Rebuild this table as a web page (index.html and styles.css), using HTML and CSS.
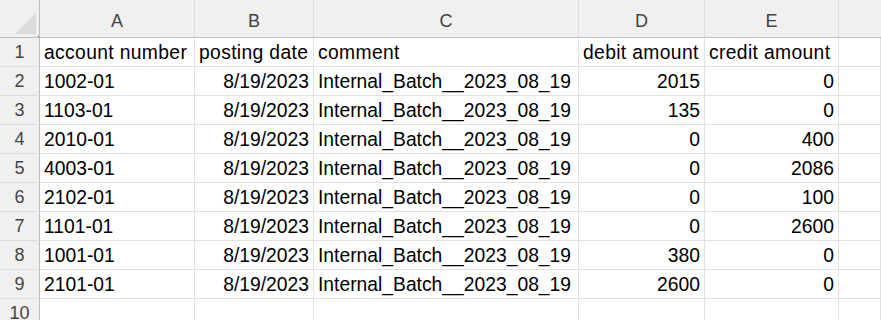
FILE: index.html
```html
<!DOCTYPE html>
<html>
<head>
<meta charset="utf-8">
<link rel="stylesheet" href="styles.css">
</head>
<body>
<div class="sheet">
  <div class="hd corner"><span class="tri"></span><span class="sel-dot"></span></div>
  <div class="hd col">A</div>
  <div class="hd col">B</div>
  <div class="hd col">C</div>
  <div class="hd col">D</div>
  <div class="hd col">E</div>
  <div class="hd col last"></div>

  <div class="hd rn">1</div>
  <div class="c t">account number</div>
  <div class="c t">posting date</div>
  <div class="c t">comment</div>
  <div class="c t">debit amount</div>
  <div class="c t">credit amount</div>
  <div class="c"></div>

  <div class="hd rn">2</div>
  <div class="c">1002-01</div>
  <div class="c r">8/19/2023</div>
  <div class="c">Internal_Batch__2023_08_19</div>
  <div class="c r">2015</div>
  <div class="c r">0</div>
  <div class="c"></div>

  <div class="hd rn">3</div>
  <div class="c">1103-01</div>
  <div class="c r">8/19/2023</div>
  <div class="c">Internal_Batch__2023_08_19</div>
  <div class="c r">135</div>
  <div class="c r">0</div>
  <div class="c"></div>

  <div class="hd rn">4</div>
  <div class="c">2010-01</div>
  <div class="c r">8/19/2023</div>
  <div class="c">Internal_Batch__2023_08_19</div>
  <div class="c r">0</div>
  <div class="c r">400</div>
  <div class="c"></div>

  <div class="hd rn">5</div>
  <div class="c">4003-01</div>
  <div class="c r">8/19/2023</div>
  <div class="c">Internal_Batch__2023_08_19</div>
  <div class="c r">0</div>
  <div class="c r">2086</div>
  <div class="c"></div>

  <div class="hd rn">6</div>
  <div class="c">2102-01</div>
  <div class="c r">8/19/2023</div>
  <div class="c">Internal_Batch__2023_08_19</div>
  <div class="c r">0</div>
  <div class="c r">100</div>
  <div class="c"></div>

  <div class="hd rn">7</div>
  <div class="c">1101-01</div>
  <div class="c r">8/19/2023</div>
  <div class="c">Internal_Batch__2023_08_19</div>
  <div class="c r">0</div>
  <div class="c r">2600</div>
  <div class="c"></div>

  <div class="hd rn">8</div>
  <div class="c">1001-01</div>
  <div class="c r">8/19/2023</div>
  <div class="c">Internal_Batch__2023_08_19</div>
  <div class="c r">380</div>
  <div class="c r">0</div>
  <div class="c"></div>

  <div class="hd rn">9</div>
  <div class="c">2101-01</div>
  <div class="c r">8/19/2023</div>
  <div class="c">Internal_Batch__2023_08_19</div>
  <div class="c r">2600</div>
  <div class="c r">0</div>
  <div class="c"></div>

  <div class="hd rn">10</div>
  <div class="c"></div>
  <div class="c"></div>
  <div class="c"></div>
  <div class="c"></div>
  <div class="c"></div>
  <div class="c"></div>
</div>
</body>
</html>
```

FILE: styles.css
```css
html, body {
  margin: 0;
  padding: 0;
  background: #ffffff;
  overflow: hidden;
}

.sheet {
  display: grid;
  grid-template-columns: 40px 155px 119px 265px 126px 134px 1fr;
  grid-template-rows: 38px repeat(10, 29px);
  width: 881px;
  font-family: "Liberation Sans", Arial, sans-serif;
  font-size: 19.3px;
  color: #000000;
}

.sheet > div {
  box-sizing: border-box;
  overflow: hidden;
  white-space: nowrap;
}

.hd {
  background: #f0f0f0;
  color: #444444;
  font-size: 18px;
}

.corner {
  position: relative;
  border-right: 1px solid #bdbdbd;
  border-bottom: 1px solid #bdbdbd;
}

.tri {
  position: absolute;
  right: 3px;
  bottom: 3px;
  width: 0;
  height: 0;
  border-left: 21px solid transparent;
  border-bottom: 21px solid #dbdbdb;
}

.sel-dot {
  position: absolute;
  right: -1px;
  bottom: -1px;
  width: 2px;
  height: 2px;
  background: #1e7a45;
}

.col {
  display: flex;
  align-items: flex-end;
  justify-content: center;
  padding-bottom: 5px;
  border-bottom: 1px solid #bdbdbd;
  border-right: 1px solid #dcdcdc;
}

.col.last {
  border-right: none;
}

.rn {
  text-align: center;
  line-height: 27px;
  padding-top: 1px;
  border-right: 1px solid #bdbdbd;
  border-bottom: 1px solid #dcdcdc;
}

.c {
  line-height: 27px;
  padding: 1px 4px 0 4px;
  border-right: 1px solid #e1e1e1;
  border-bottom: 1px solid #e1e1e1;
}

.c.t {
  letter-spacing: 0.35px;
}

.c.r {
  text-align: right;
  padding-right: 4px;
}
```
